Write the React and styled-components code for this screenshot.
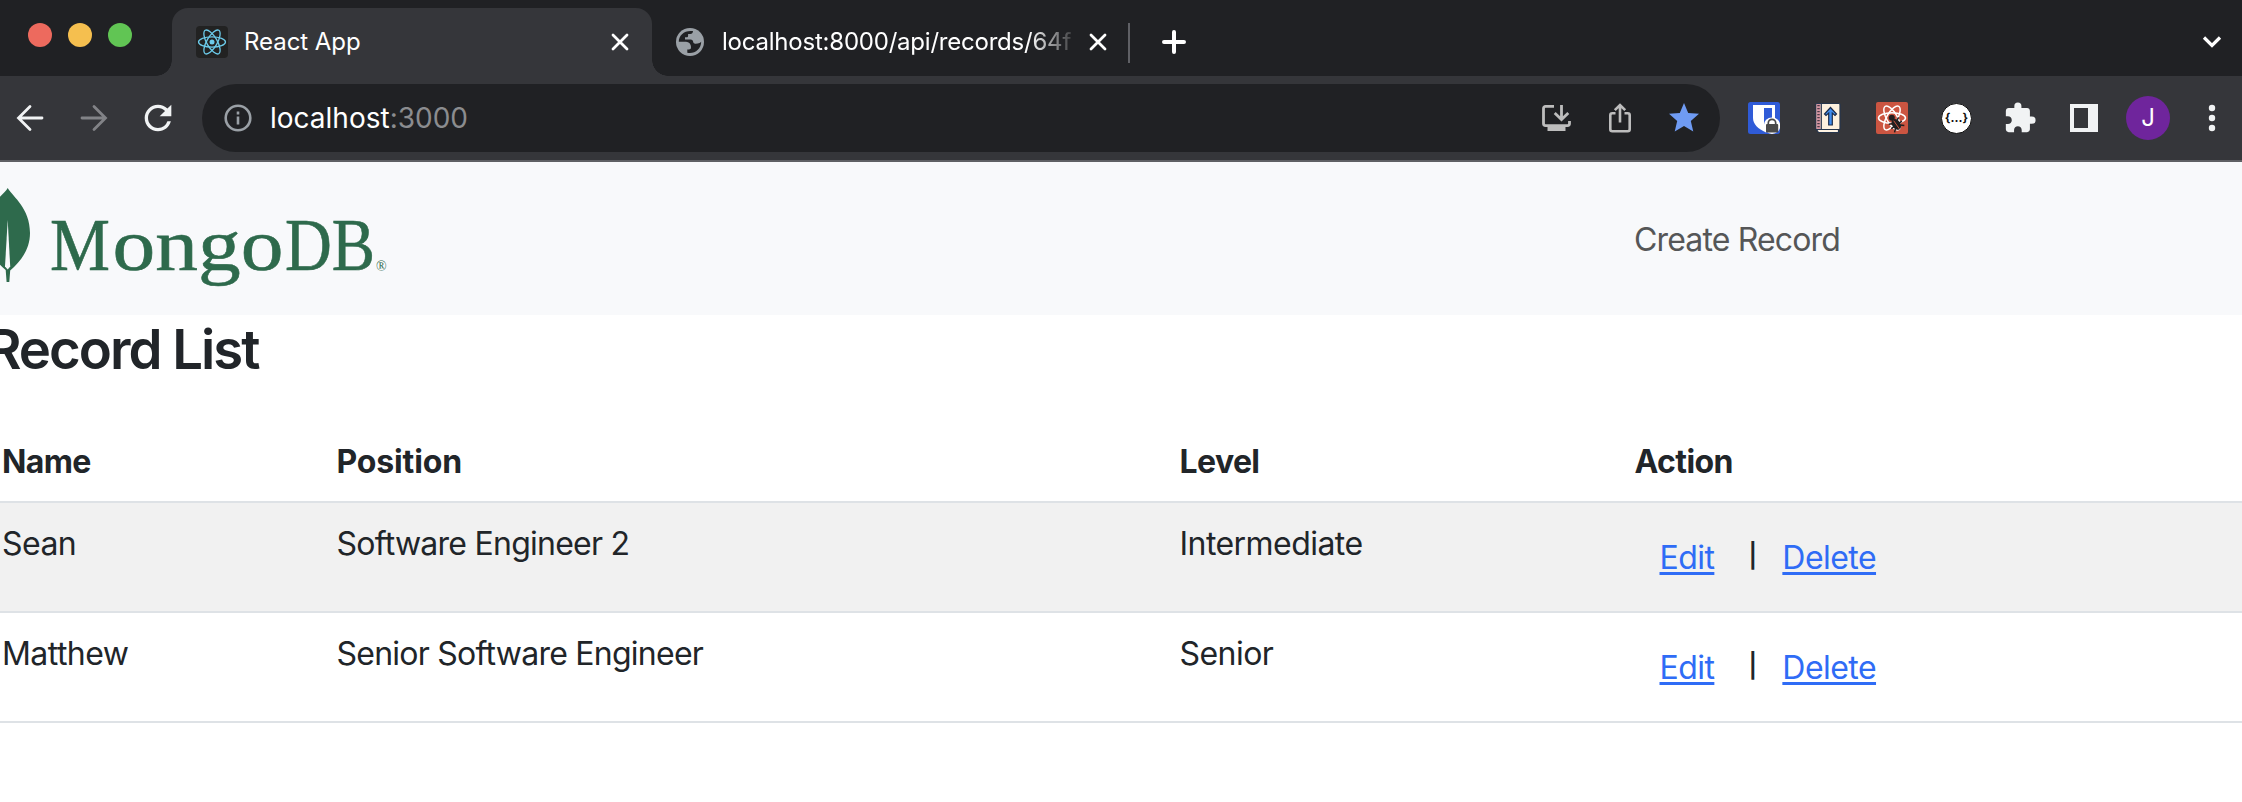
import React from 'react';
import styled, { createGlobalStyle } from 'styled-components';
import { MdExtension, MdRefresh, MdStar } from 'react-icons/md';

const GlobalStyle = createGlobalStyle`
  * { box-sizing: border-box; }
  body {
    margin: 0;
    overflow: hidden;
    background: #fff;
    color: #212529;
    font-family: Inter, "Liberation Sans", sans-serif;
  }
`;

const Window = styled.div`
  width: 2242px;
  height: 802px;
  overflow: hidden;
  display: flex;
  flex-direction: column;
`;

/* ---------- browser chrome ---------- */

const TabStrip = styled.div`
  height: 76px;
  flex: none;
  display: flex;
  align-items: flex-end;
  background: #202124;
  color: #fff;
`;

const TrafficLights = styled.div`
  width: 172px;
  height: 70px;
  padding-left: 28px;
  display: flex;
  align-items: center;
  gap: 16px;
  align-self: flex-start;
`;

const Light = styled.span`
  width: 24px;
  height: 24px;
  border-radius: 50%;
  background: ${(p) => p.$color};
`;

const Tab = styled.div`
  position: relative;
  width: ${(p) => p.$width}px;
  height: 68px;
  padding: 0 ${(p) => p.$right}px 0 24px;
  display: flex;
  align-items: center;
  border-radius: 16px 16px 0 0;
  background: ${(p) => (p.$active ? '#35363a' : 'transparent')};
  ${(p) =>
    p.$active &&
    `
    &::before, &::after {
      content: '';
      position: absolute;
      bottom: 0;
      width: 16px;
      height: 16px;
    }
    &::before {
      left: -16px;
      background: radial-gradient(circle at 0 0, transparent 15.5px, #35363a 16px);
    }
    &::after {
      right: -16px;
      background: radial-gradient(circle at 100% 0, transparent 15.5px, #35363a 16px);
    }
  `}
`;

const TabTitle = styled.span`
  flex: 1;
  margin-left: ${(p) => p.$gap}px;
  overflow: hidden;
  white-space: nowrap;
  font-size: 24px;
  line-height: 34px;
  letter-spacing: ${(p) => p.$spacing}px;
  ${(p) =>
    p.$fade &&
    `
    margin-right: 10px;
    mask-image: linear-gradient(to right, #000 calc(100% - 50px), transparent);
  `}
`;

const TabDivider = styled.span`
  width: 2px;
  height: 40px;
  margin-bottom: 13px;
  background: #5f6065;
`;

const NewTab = styled.span`
  display: flex;
  margin: 0 0 22px 32px;
`;

const TabSearch = styled.span`
  display: flex;
  margin: 0 20px 27px auto;
`;

const Toolbar = styled.div`
  height: 86px;
  flex: none;
  display: flex;
  align-items: center;
  background: #35363a;
  border-bottom: 2px solid #5f6064;
  color: #f1f3f4;
`;

const Slots = styled.div`
  display: flex;
  flex: none;
  margin-left: ${(p) => p.$offset || 0}px;
  margin-right: ${(p) => p.$end || 0}px;
`;

const Slot = styled.span`
  width: 64px;
  height: 68px;
  display: flex;
  align-items: center;
  justify-content: center;
  color: ${(p) => p.$color || 'inherit'};
  svg { display: block; }
`;

const Omnibox = styled.div`
  flex: 1;
  height: 68px;
  margin: 0 12px;
  padding: 0 4px 0 22px;
  display: flex;
  align-items: center;
  border-radius: 34px;
  background: #202124;
`;

const Address = styled.span`
  flex: 1;
  margin-left: 18px;
  font-size: 28px;
  line-height: 40px;
  color: #fff;
`;

const Port = styled.span`
  color: #8b8c8f;
`;

const Avatar = styled.span`
  flex: none;
  width: 44px;
  height: 44px;
  border-radius: 50%;
  display: flex;
  align-items: center;
  justify-content: center;
  background: #6f259c;
  color: #fff;
  font: 400 24px/44px Inter, sans-serif;
`;

const Braces = styled.span`
  flex: none;
  width: 31px;
  height: 31px;
  margin-right: -1px;
  border: 1.5px solid #111;
  border-radius: 50%;
  display: flex;
  align-items: center;
  justify-content: center;
  background: #fff;
  color: #111;
  font: 700 12px/24px Inter, sans-serif;
`;

/* ---------- page ---------- */

const Navbar = styled.nav`
  height: 153px;
  flex: none;
  display: flex;
  align-items: center;
  background: #f8f9fb;
`;

const Brand = styled.svg`
  flex: none;
  width: 400px;
  height: 153px;
`;

const NavLink = styled.a`
  margin-left: 1234px;
  padding-top: 3px;
  font-size: 32px;
  line-height: 48px;
  letter-spacing: -0.85px;
  color: #555657;
`;

const Content = styled.main`
  width: 2290px;
  margin-left: -14px;
`;

const Title = styled.h3`
  margin: 0;
  padding-top: 1px;
  height: 106px;
  font-size: 54.5px;
  line-height: 67px;
  font-weight: 600;
  letter-spacing: -2px;
`;

const Table = styled.table`
  width: 100%;
  table-layout: fixed;
  border-collapse: separate;
  border-spacing: 0;
  font-size: 32px;
  line-height: 48px;
`;

const Col = styled.col`
  width: ${(p) => p.$width};
`;

const HeadCell = styled.th`
  height: 82px;
  padding: 17px 16px 15px;
  text-align: left;
  vertical-align: top;
  font-weight: 700;
  letter-spacing: ${(p) => (p.$loose ? -0.15 : -0.6)}px;
  border-bottom: 2px solid #dee2e6;
`;

const Row = styled.tr`
  background: ${(p) => (p.$striped ? '#f1f1f1' : '#fff')};
`;

const Cell = styled.td`
  height: 110px;
  padding: 17px 16px 15px;
  vertical-align: top;
  letter-spacing: ${(p) => (p.$tight ? -0.75 : -0.55)}px;
  border-bottom: 2px solid #dee2e6;
`;

const Actions = styled.div`
  display: flex;
  align-items: center;
  height: 76px;
`;

const ActionLink = styled.a`
  padding: 0 26px 0 25px;
  color: #2f6cf6;
  text-decoration: underline;
  text-decoration-thickness: 3px;
  text-underline-offset: 3px;
`;

const Pipe = styled.span`
  width: 17px;
  padding-left: 8px;
  text-align: center;
  font-size: 24px;
  font-weight: 600;
  letter-spacing: 0;
  line-height: 44px;
  padding-bottom: 4px;
`;

/* ---------- icons ---------- */

const CloseIcon = () => (
  <svg width="18" height="18" viewBox="0 0 18 18" stroke="#fff" strokeWidth="2.8" strokeLinecap="round">
    <path d="M2 2l14 14M16 2L2 16" />
  </svg>
);

const Orbits = ({ size, stroke, width }) => (
  <svg width={size} height={size} viewBox="0 0 32 32" fill="none" stroke={stroke} strokeWidth={width}>
    <ellipse cx="16" cy="16" rx="13.5" ry="5.2" />
    <ellipse cx="16" cy="16" rx="13.5" ry="5.2" transform="rotate(60 16 16)" />
    <ellipse cx="16" cy="16" rx="13.5" ry="5.2" transform="rotate(120 16 16)" />
    <circle cx="16" cy="16" r="2.5" fill={stroke} stroke="none" />
  </svg>
);

const Favicon = styled.span`
  width: 32px;
  height: 32px;
  border-radius: 4px;
  background: #222;
  svg { display: block; }
`;

const GlobeIcon = () => (
  <svg width="28" height="28" viewBox="0 0 28 28">
    <circle cx="14" cy="14" r="14" fill="#9aa0a6" />
    <path
      fill="#202124"
      d="M2.800 13.800C2.600 7 9 1.800 17 3.100c0 2-1.200 2.900-2.700 2.900h-2.200v1.800c0 1-.6 1.500-1.500 1.500H9v2.200h5.500c1.800 0 2.500 1 2.700 2.500.3 1.300 1.200 1.900 2.500 1.700l2-.2c1.400-.1 2.300-.6 3.500-1.700 0 7.300-6.800 12.600-13.900 11v-3.300h1.500c1.500 0 2.200-.8 2.200-2.200 0-3.200-2-5.400-5-5.500z"
    />
  </svg>
);

const PlusIcon = () => (
  <svg width="24" height="24" viewBox="0 0 24 24" stroke="#fff" strokeWidth="4" strokeLinecap="round">
    <path d="M12 2v20M2 12h20" />
  </svg>
);

const ChevronIcon = () => (
  <svg width="20" height="14" viewBox="0 0 20 14" fill="none" stroke="#fff" strokeWidth="3.200">
    <path d="M2 2.500l8 8 8-8" />
  </svg>
);

const ArrowIcon = ({ flip }) => (
  <svg width="28" height="28" viewBox="0 0 28 28" fill="none" stroke="currentColor" strokeWidth="2.800" strokeLinecap="round">
    <path d={flip ? 'M2 14h23M14 2.500L25.500 14 14 25.500' : 'M26 14H3M14 2.500L2.500 14 14 25.500'} />
  </svg>
);

const InfoIcon = () => (
  <svg width="28" height="28" viewBox="0 0 28 28" fill="none" stroke="#9aa0a6" strokeWidth="2.600">
    <circle cx="14" cy="14" r="12.300" />
    <path d="M14 12.500v8M14 7.500v3" />
  </svg>
);

const InstallIcon = () => (
  <svg width="30" height="28" viewBox="0 0 30 28" fill="none" stroke="#bdbdbd" strokeWidth="2.800">
    <path d="M13 2.400H4.500a2 2 0 0 0-2 2v15.200a2 2 0 0 0 2 2h22a2 2 0 0 0 2-2V17" />
    <path d="M20.500 1v14M13.700 9l6.800 6.500L27.300 9" />
    <path d="M6.500 24.500h18" strokeWidth="5" />
  </svg>
);

const ShareIcon = () => (
  <svg width="24" height="30" viewBox="0 0 24 30" fill="none" stroke="#bdbdbd" strokeWidth="2.600">
    <path d="M7.500 10.300H4.300a2 2 0 0 0-2 2v14a2 2 0 0 0 2 2h15.400a2 2 0 0 0 2-2v-14a2 2 0 0 0-2-2h-3.200" />
    <path d="M12 19.500V2.500M6.800 7.200L12 2l5.200 5.200" />
  </svg>
);

const ShieldIcon = () => (
  <svg width="32" height="32" viewBox="0 0 32 32">
    <rect width="32" height="32" rx="2.500" fill="#2f5bd7" />
    <path d="M5 3h22v14c0 6-4 10-9 13.500C10 27 5 22 5 16z" fill="#fff" />
    <path d="M16 6h8v10c0 4-3 7-8 9.500z" fill="#2f5bd7" />
    <circle cx="24" cy="23.700" r="8.300" fill="#fff" />
    <path d="M20.300 23v-2a3.700 3.700 0 0 1 7.400 0v2" fill="none" stroke="#4a4a4a" strokeWidth="1.700" />
    <rect x="18" y="22" width="12.200" height="8.500" rx="1" fill="#4a4a4a" />
  </svg>
);

const BookIcon = () => (
  <svg width="26" height="32" viewBox="0 0 26 32">
    <path d="M1.500 27.500h22v3h-20z" fill="#fff3e2" stroke="#26364d" strokeWidth="1.200" />
    <rect x="1" y="1.500" width="24" height="26" rx="1" fill="#fdf1df" stroke="#26364d" strokeWidth="1.200" />
    <rect x="1.500" y="2" width="4" height="25" fill="#d795a1" />
    <path d="M3.500 3v24" stroke="#4a3b48" strokeWidth="2.400" strokeDasharray="1.200 1.800" />
    <path d="M6.300 2v25" stroke="#26364d" strokeWidth="1.200" />
    <path d="M15.500 5.500l6 6.500-1.500 1.500-2.700-2.500v12h-3.600V11L11 13.500 9.500 12z" fill="#3f8df0" stroke="#1d2c48" strokeWidth="1.200" />
  </svg>
);

const DebugIcon = () => (
  <svg width="32" height="32" viewBox="0 0 32 32" fill="none">
    <rect width="32" height="32" rx="2" fill="#cb5541" />
    <g stroke="#fff" strokeWidth="1.500">
      <ellipse cx="16" cy="16" rx="13.500" ry="5.300" />
      <ellipse cx="16" cy="16" rx="13.500" ry="5.300" transform="rotate(60 16 16)" />
      <ellipse cx="16" cy="16" rx="13.500" ry="5.300" transform="rotate(120 16 16)" />
    </g>
    <circle cx="15.800" cy="15.800" r="3" fill="#211f20" />
    <g transform="rotate(-35 20 22)">
      <ellipse cx="20" cy="22.500" rx="4" ry="6" fill="#211f20" />
      <path d="M14 18l4 2M26 18l-4 2M13.500 23h13M14 28l3.500-3M26 28l-3.500-3" stroke="#211f20" strokeWidth="1.500" />
      <path d="M20 18v10" stroke="#cb5541" strokeWidth=".9" />
    </g>
  </svg>
);

const PanelIcon = () => (
  <svg width="28" height="28" viewBox="0 0 28 28">
    <path fillRule="evenodd" fill="#f1f3f4" d="M0 0h28v28H0zM4 4v20h14V4z" />
  </svg>
);

const DotsIcon = () => (
  <svg width="8" height="28" viewBox="0 0 8 28" fill="#f1f3f4">
    <circle cx="4" cy="4" r="3.200" />
    <circle cx="4" cy="14" r="3.200" />
    <circle cx="4" cy="24" r="3.200" />
  </svg>
);

const LogoText = styled.text`
  font-family: "Liberation Serif", serif;
  font-size: ${(p) => p.$size || 75}px;
  fill: #2e6a4c;
  stroke: #2e6a4c;
  stroke-width: ${(p) => (p.$size ? 0 : 0.6)}px;
`;

const MongoLogo = () => (
  <Brand viewBox="0 0 400 153" aria-label="MongoDB">
    <path
      fill="#2e6a4c"
      d="M7.700 26C4 33-14.500 43-14.500 70c0 18 10 29 20.200 38l.9 12h2.700l.9-11.500C20 100 30 88 30 71 30 46 13 35 7.700 26z"
    />
    <path fill="#f8f9fb" d="M7.700 58L5 104.500l2.700 3 2.500-3z" />
    <LogoText x="50" y="107.500" textLength="60" lengthAdjust="spacingAndGlyphs">M</LogoText>
    <LogoText x="112.500" y="107.500" textLength="171" lengthAdjust="spacingAndGlyphs">ongo</LogoText>
    <LogoText x="285" y="107.500" textLength="90" lengthAdjust="spacingAndGlyphs">DB</LogoText>
    <LogoText x="376" y="109" $size={14}>®</LogoText>
  </Brand>
);

/* ---------- app ---------- */

const records = [
  { name: 'Sean', position: 'Software Engineer 2', level: 'Intermediate' },
  { name: 'Matthew', position: 'Senior Software Engineer', level: 'Senior' },
];

export default function App() {
  return (
    <Window>
      <GlobalStyle />
      <TabStrip>
        <TrafficLights>
          <Light $color="#ed6a5e" />
          <Light $color="#f5bf4f" />
          <Light $color="#61c554" />
        </TrafficLights>
        <Tab $active $width={480} $right={23}>
          <Favicon><Orbits size={32} stroke="#6ccbea" width={1.3} /></Favicon>
          <TabTitle $gap={16} $spacing={-0.05}>React App</TabTitle>
          <CloseIcon />
        </Tab>
        <Tab $width={476} $right={21}>
          <GlobeIcon />
          <TabTitle $gap={18} $spacing={-0.22} $fade>localhost:8000/api/records/64f</TabTitle>
          <CloseIcon />
        </Tab>
        <TabDivider />
        <NewTab><PlusIcon /></NewTab>
        <TabSearch><ChevronIcon /></TabSearch>
      </TabStrip>

      <Toolbar>
        <Slots $offset={-2}>
          <Slot><ArrowIcon /></Slot>
          <Slot $color="#828387"><ArrowIcon flip /></Slot>
          <Slot><MdRefresh size={40} /></Slot>
        </Slots>
        <Omnibox>
          <InfoIcon />
          <Address>localhost<Port>:3000</Port></Address>
          <Slots>
            <Slot><InstallIcon /></Slot>
            <Slot><ShareIcon /></Slot>
            <Slot $color="#6f9bf3"><MdStar size={36} /></Slot>
          </Slots>
        </Omnibox>
        <Slots $end={-2}>
          <Slot><ShieldIcon /></Slot>
          <Slot><BookIcon /></Slot>
          <Slot><DebugIcon /></Slot>
          <Slot><Braces>{'{...}'}</Braces></Slot>
          <Slot><MdExtension size={34} /></Slot>
          <Slot><PanelIcon /></Slot>
          <Slot><Avatar>J</Avatar></Slot>
          <Slot><DotsIcon /></Slot>
        </Slots>
      </Toolbar>

      <Navbar>
        <MongoLogo />
        <NavLink>Create Record</NavLink>
      </Navbar>

      <Content>
        <Title>Record List</Title>
        <Table>
          <colgroup>
            <Col $width="334.5px" />
            <Col $width="843px" />
            <Col $width="455px" />
            <Col $width="auto" />
          </colgroup>
          <thead>
            <tr>
              <HeadCell>Name</HeadCell>
              <HeadCell $loose>Position</HeadCell>
              <HeadCell>Level</HeadCell>
              <HeadCell>Action</HeadCell>
            </tr>
          </thead>
          <tbody>
            {records.map((r, i) => (
              <Row key={r.name} $striped={i % 2 === 0}>
                <Cell>{r.name}</Cell>
                <Cell $tight>{r.position}</Cell>
                <Cell>{r.level}</Cell>
                <Cell>
                  <Actions>
                    <ActionLink>Edit</ActionLink>
                    <Pipe>|</Pipe>
                    <ActionLink>Delete</ActionLink>
                  </Actions>
                </Cell>
              </Row>
            ))}
          </tbody>
        </Table>
      </Content>
    </Window>
  );
}
